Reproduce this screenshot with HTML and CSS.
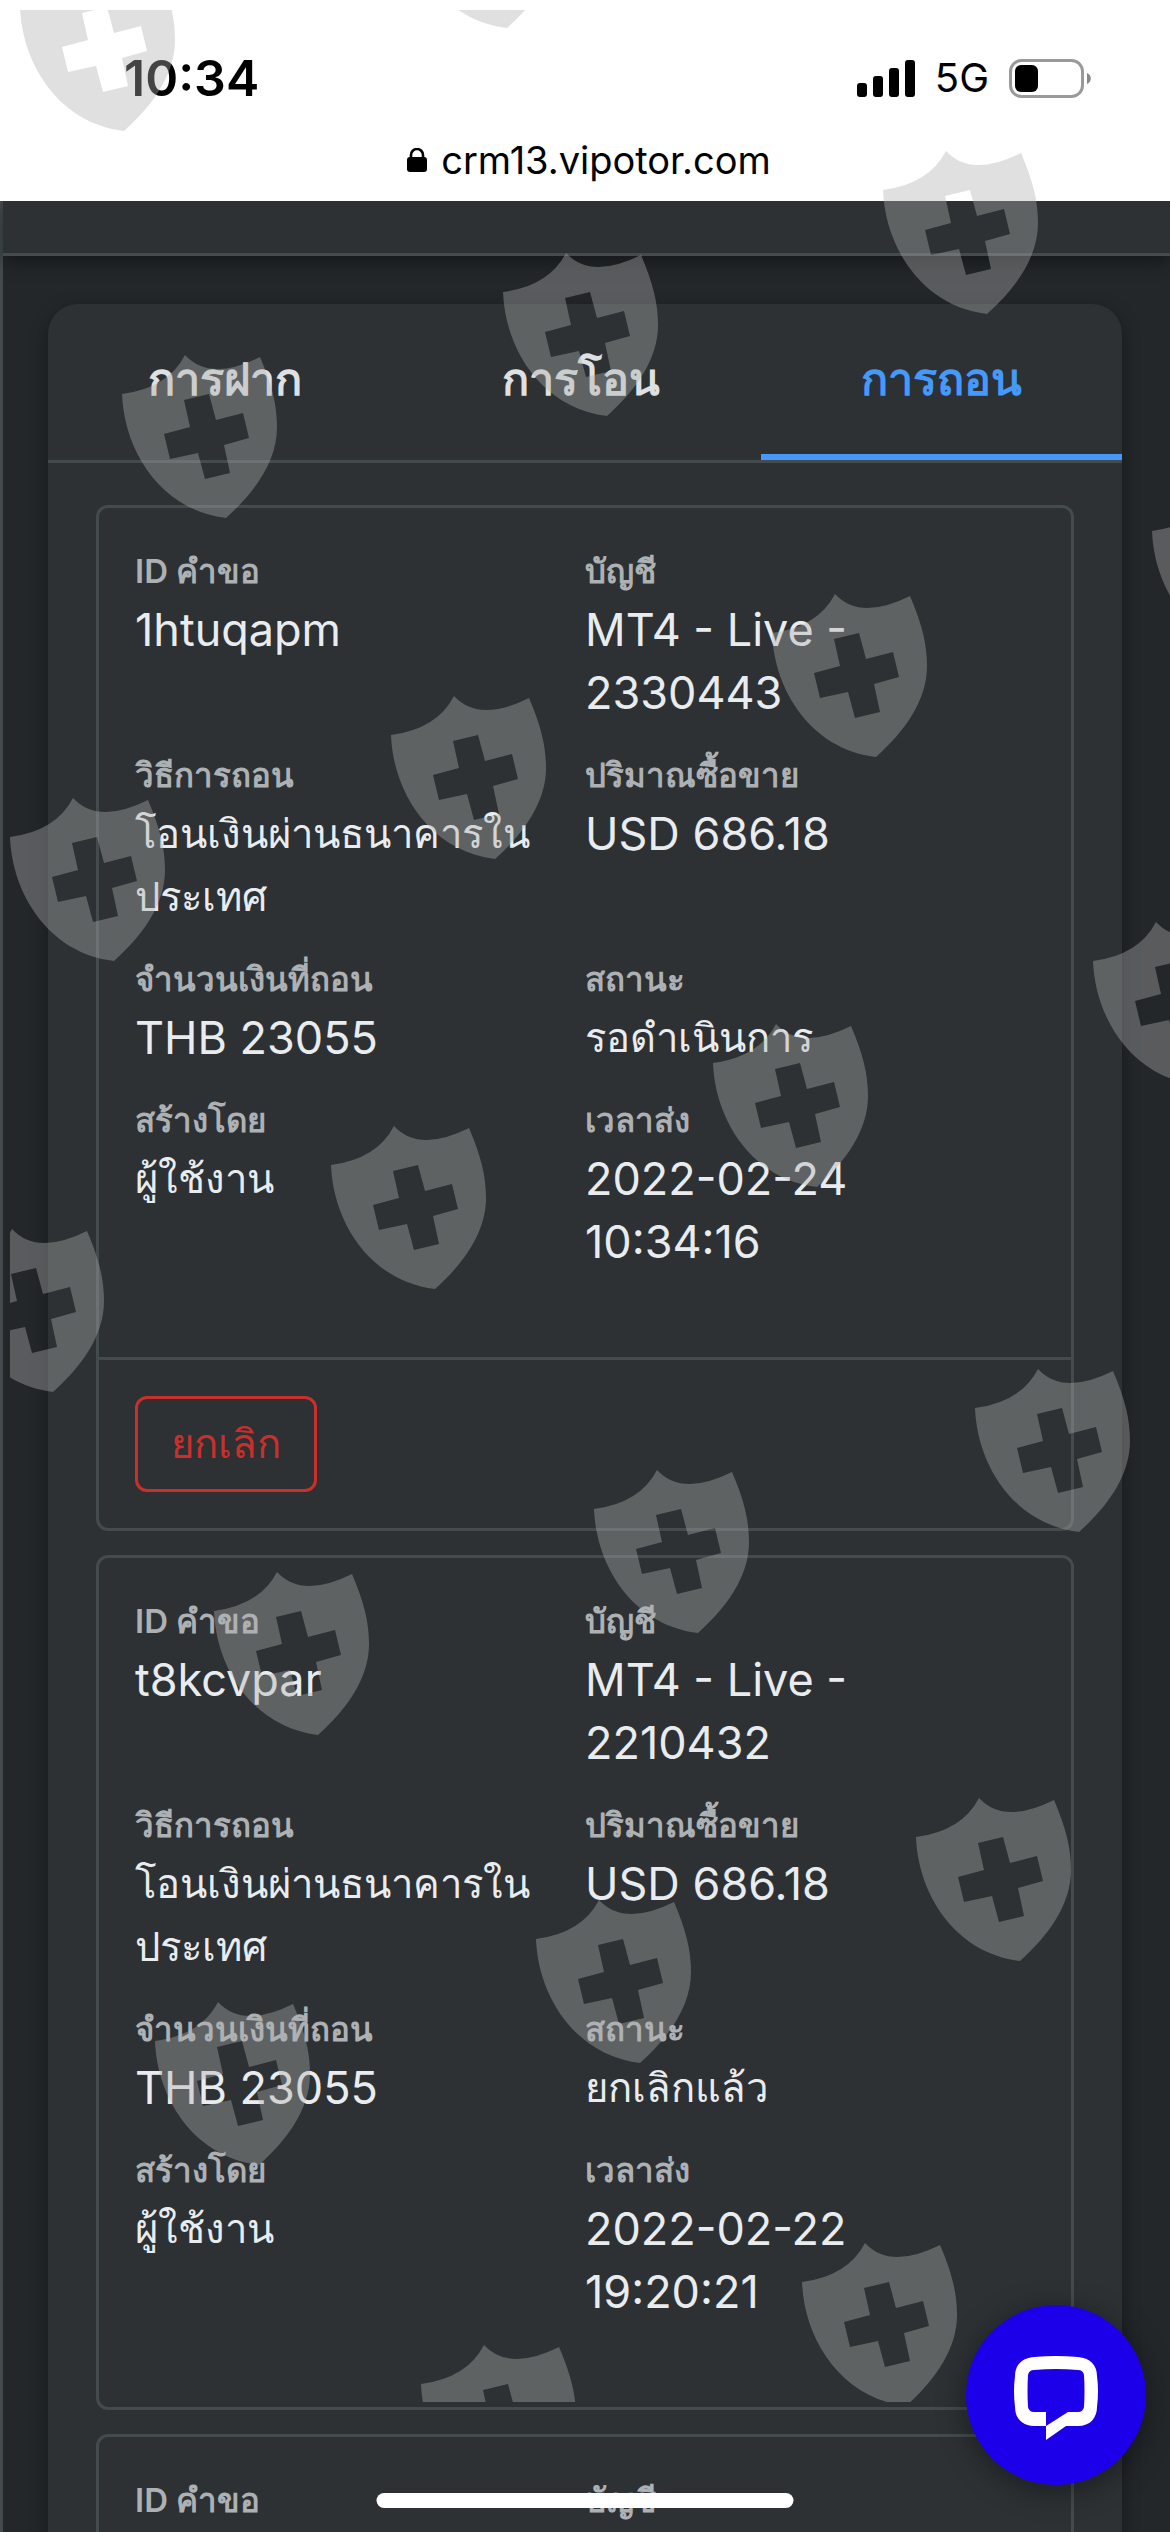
FILE: index.html
```html
<!DOCTYPE html>
<html lang="th">
<head>
    <meta charset="UTF-8">
    <meta name="viewport" content="width=device-width, initial-scale=1.0">
    <title>crm13.vipotor.com</title>
    <link rel="stylesheet" href="styles.css">
</head>
<body>
    <div class="screen">
        <header class="browser-bar">
            <div class="status-bar">
                <span class="time">10:34</span>
                <div class="status-icons">
                    <svg class="signal" width="58" height="37" viewBox="0 0 58 37" aria-hidden="true">
                        <rect x="0" y="23" width="10" height="14" rx="3"/>
                        <rect x="16" y="16" width="10" height="21" rx="3"/>
                        <rect x="32" y="8" width="10" height="29" rx="3"/>
                        <rect x="48" y="0" width="10" height="37" rx="3"/>
                    </svg>
                    <span class="network">5G</span>
                    <svg class="battery" width="82" height="39" viewBox="0 0 82 39" aria-hidden="true">
                        <rect x="1.5" y="1.5" width="72" height="36" rx="11" fill="none" stroke="#999" stroke-width="3"/>
                        <rect x="6" y="6" width="23" height="27" rx="6"/>
                        <path d="M78 14c5 2 5 9 0 11z" fill="#888"/>
                    </svg>
                </div>
            </div>
            <div class="address">
                <svg class="lock" width="20" height="24" viewBox="0 0 20 24" aria-hidden="true">
                    <rect x="0" y="9" width="20" height="15" rx="3"/>
                    <path d="M4 11V7a6 6 0 0 1 12 0v4" fill="none" stroke="#000" stroke-width="2.6"/>
                </svg>
                <span>crm13.vipotor.com</span>
            </div>
        </header>

        <div class="page">
            <div class="topbar"></div>

            <main class="card">
                <nav class="tabs">
                    <a class="tab" href="#deposit">การฝาก</a>
                    <a class="tab" href="#transfer">การโอน</a>
                    <a class="tab active" href="#withdraw">การถอน</a>
                </nav>

                <div class="list">
                    <article class="item">
                        <dl class="fields">
                            <div class="field"><dt>ID คำขอ</dt><dd>1htuqapm</dd></div>
                            <div class="field"><dt>บัญชี</dt><dd>MT4 - Live - 2330443</dd></div>
                            <div class="field"><dt>วิธีการถอน</dt><dd class="thai">โอนเงินผ่านธนาคารใน<wbr>ประเทศ</dd></div>
                            <div class="field"><dt>ปริมาณซื้อขาย</dt><dd>USD 686.18</dd></div>
                            <div class="field"><dt>จำนวนเงินที่ถอน</dt><dd>THB 23055</dd></div>
                            <div class="field"><dt>สถานะ</dt><dd class="thai">รอดำเนินการ</dd></div>
                            <div class="field"><dt>สร้างโดย</dt><dd class="thai">ผู้ใช้งาน</dd></div>
                            <div class="field"><dt>เวลาส่ง</dt><dd>2022-02-24 10:34:16</dd></div>
                        </dl>
                        <div class="actions">
                            <button class="cancel" type="button">ยกเลิก</button>
                        </div>
                    </article>

                    <article class="item">
                        <dl class="fields">
                            <div class="field"><dt>ID คำขอ</dt><dd>t8kcvpar</dd></div>
                            <div class="field"><dt>บัญชี</dt><dd>MT4 - Live - 2210432</dd></div>
                            <div class="field"><dt>วิธีการถอน</dt><dd class="thai">โอนเงินผ่านธนาคารใน<wbr>ประเทศ</dd></div>
                            <div class="field"><dt>ปริมาณซื้อขาย</dt><dd>USD 686.18</dd></div>
                            <div class="field"><dt>จำนวนเงินที่ถอน</dt><dd>THB 23055</dd></div>
                            <div class="field"><dt>สถานะ</dt><dd class="thai">ยกเลิกแล้ว</dd></div>
                            <div class="field"><dt>สร้างโดย</dt><dd class="thai">ผู้ใช้งาน</dd></div>
                            <div class="field"><dt>เวลาส่ง</dt><dd>2022-02-22 19:20:21</dd></div>
                        </dl>
                    </article>

                    <article class="item">
                        <dl class="fields">
                            <div class="field"><dt>ID คำขอ</dt></div>
                            <div class="field"><dt>บัญชี</dt></div>
                        </dl>
                    </article>
                </div>
            </main>
        </div>

        <!-- Shield pattern over the page -->
        <svg class="shields" aria-hidden="true">
            <defs>
                <path id="shield" fill-rule="evenodd" d="M0 39Q46 33 63 0Q88 27 138 2C150 30 155 50 155 72C155 107 132 138 104 163C38 155 2 95 0 39ZM62 45L68 72L42 79L48 104L76 98L83 124L108 118L102 90L127 83L121 58L94 65L87 39Z"/>
            </defs>
            <g transform="translate(-10 -10)">
                <use href="#shield" x="20" y="-32"/>
                <use href="#shield" x="403" y="-135"/>
                <use href="#shield" x="883" y="151"/>
                <use href="#shield" x="503" y="253"/>
                <use href="#shield" x="122" y="355"/>
                <use href="#shield" x="1152" y="492"/>
                <use href="#shield" x="772" y="594"/>
                <use href="#shield" x="391" y="696"/>
                <use href="#shield" x="10" y="798"/>
                <use href="#shield" x="1093" y="922"/>
                <use href="#shield" x="713" y="1024"/>
                <use href="#shield" x="331" y="1126"/>
                <use href="#shield" x="-51" y="1229"/>
                <use href="#shield" x="975" y="1369"/>
                <use href="#shield" x="594" y="1470"/>
                <use href="#shield" x="214" y="1572"/>
                <use href="#shield" x="916" y="1798"/>
                <use href="#shield" x="536" y="1900"/>
                <use href="#shield" x="155" y="2002"/>
                <use href="#shield" x="802" y="2243"/>
                <use href="#shield" x="421" y="2345"/>
            </g>
        </svg>

        <button class="chat" type="button" aria-label="Chat">
            <svg width="84" height="84" viewBox="0 0 84 84" aria-hidden="true">
                <path fill="#fff" fill-rule="evenodd" d="M20 1Q42-1 64 1C76 2 83 9 83 20Q85 35 83 51C83 62 76 70 64 70H52L32 84V70H20C8 70 1 62 1 51Q-1 35 1 20C1 9 8 2 20 1ZM20 14Q15 14 14 19Q13 35 14 51Q15 56 20 56H32V70L54 56H64Q69 56 70 51Q71 35 70 19Q69 14 64 14Q42 12 20 14Z"/>
            </svg>
        </button>
        <div class="home-indicator"></div>
    </div>
</body>
</html>
```

FILE: styles.css
```css
:root {
    --page-bg: #23272a;
    --card-bg: #2d3134;
    --line: #434b4d;
    --text: #e9ecef;
    --muted: #adb1b4;
    --blue: #4499fb;
    --red: #c9302c;
}

* {
    box-sizing: border-box;
}

body {
    margin: 0;
    font-family: Inter, sans-serif;
    font-size: 45px;
    background-color: var(--page-bg);
    color: var(--text);
}

.screen {
    position: relative;
    display: flex;
    flex-direction: column;
    height: 100vh;
    overflow: hidden;
}

/* Phone status and address bar */
.browser-bar {
    position: relative;
    z-index: 1;
    flex: none;
    background-color: #fff;
    color: #000;
}

.status-bar {
    display: flex;
    justify-content: space-between;
    align-items: center;
    padding: 48px 79px 0 124px;
}

.time {
    font-size: 50px;
    line-height: 60px;
    font-weight: 600;
}

.status-icons {
    display: flex;
    align-items: center;
    gap: 20px;
}

.network {
    font-size: 40px;
    line-height: 60px;
}

.address {
    display: flex;
    justify-content: center;
    align-items: center;
    gap: 14px;
    padding: 28px 0 17px 8px;
    font-size: 38px;
    line-height: 48px;
}

/* Page */
.page {
    flex: 1;
    display: flex;
    flex-direction: column;
    min-height: 0;
    border-left: 3px solid var(--line);
}

.topbar {
    flex: none;
    height: 55px;
    background-color: var(--card-bg);
    border-bottom: 3px solid var(--line);
    box-shadow: 0 6px 18px rgba(0, 0, 0, 0.4);
}

.card {
    flex: 1;
    margin: 48px 48px 0 45px;
    background-color: var(--card-bg);
    border-radius: 30px 30px 0 0;
    box-shadow: 0 6px 18px rgba(0, 0, 0, 0.35);
}

.tabs {
    display: flex;
    border-bottom: 3px solid var(--line);
}

.tab {
    flex: 1 1 auto;
    padding: 48px 0;
    border-bottom: 6px solid transparent;
    font-size: 45px;
    line-height: 54px;
    font-weight: 600;
    text-align: center;
    text-decoration: none;
    color: #dfe0e1;
}

.tab.active {
    color: var(--blue);
    border-bottom-color: var(--blue);
}

.list {
    display: flex;
    flex-direction: column;
    gap: 24px;
    padding: 42px 48px;
}

.item {
    border: 3px solid var(--line);
    border-radius: 12px;
}

.fields {
    display: grid;
    grid-template-columns: 1fr 1fr;
    row-gap: 24px;
    margin: 0;
    padding: 36px 36px 84px;
}

.field {
    padding-right: 36px;
}

dt {
    font-size: 33px;
    line-height: 54px;
    font-weight: 600;
    color: var(--muted);
}

dd {
    margin: 0;
    font-size: 45px;
    line-height: 63px;
}

dd.thai {
    font-size: 40px;
}

.actions {
    padding: 36px;
    border-top: 3px solid var(--line);
}

.cancel {
    padding: 15px 33px;
    border: 3px solid var(--red);
    border-radius: 12px;
    background: none;
    color: var(--red);
    font-family: inherit;
    font-size: 40px;
    line-height: 60px;
}

/* Overlays */
.shields {
    position: absolute;
    z-index: 2;
    top: 10px;
    left: 10px;
    width: calc(100% - 10px);
    height: calc(100% - 140px);
    overflow: hidden;
    fill: rgba(176, 176, 176, 0.39);
    pointer-events: none;
}

.chat {
    position: absolute;
    z-index: 3;
    right: 24px;
    bottom: 47px;
    display: flex;
    justify-content: center;
    align-items: center;
    width: 180px;
    height: 180px;
    padding: 6px 0 0;
    border: none;
    border-radius: 50%;
    background-color: #1c00ea;
    box-shadow: 0 6px 30px rgba(0, 0, 0, 0.4);
}

.home-indicator {
    position: absolute;
    z-index: 3;
    left: 50%;
    bottom: 24px;
    width: 417px;
    height: 15px;
    transform: translateX(-50%);
    border-radius: 8px;
    background-color: #fff;
}
```
